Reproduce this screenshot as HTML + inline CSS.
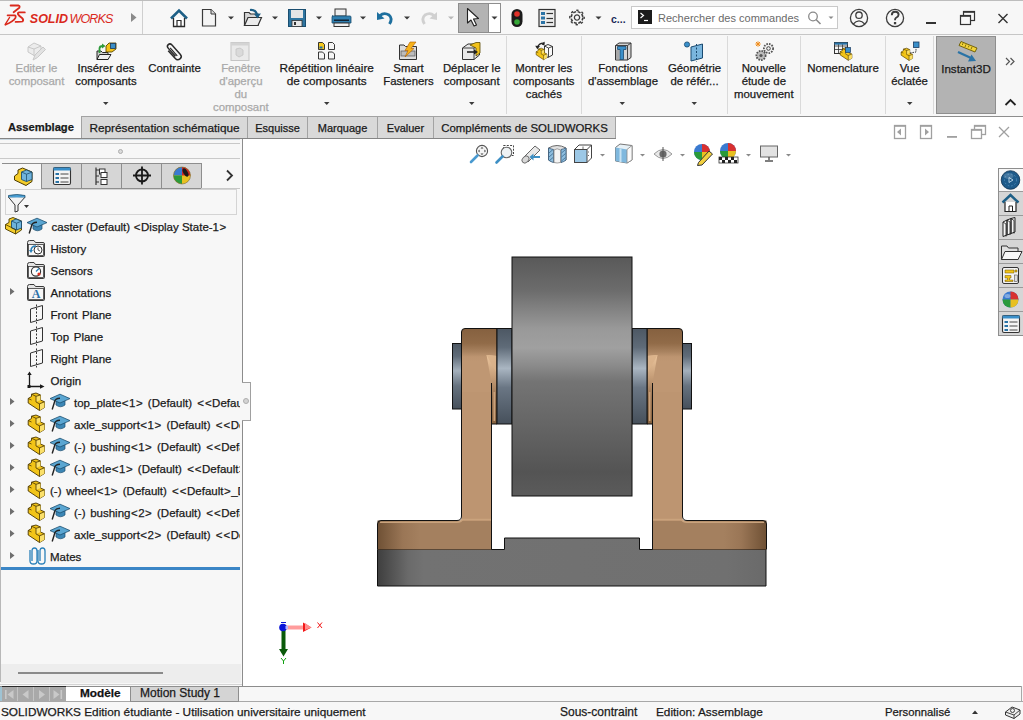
<!DOCTYPE html>
<html><head><meta charset="utf-8">
<style>
*{box-sizing:border-box;margin:0;padding:0}
html,body{width:1023px;height:720px;overflow:hidden;background:#fff;font-family:"Liberation Sans",sans-serif;font-size:12px;color:#1a1a1a;position:relative;-webkit-text-stroke:0.25px currentColor}
.a{position:absolute}
svg{position:absolute;overflow:visible}
.ln{position:absolute;background:#a0a0a0}
.rb{position:absolute;top:62px;text-align:center;font-size:11.4px;line-height:13px;color:#1a1a1a;white-space:nowrap;width:120px}
.rb.g{color:#a9a9a9}
.dd{position:absolute;width:0;height:0;border-left:3px solid transparent;border-right:3px solid transparent;border-top:3px solid #3c3c3c}
.dd.l{border-top-color:#b4b4b4}
.sep{position:absolute;top:36px;width:1px;height:78px;background:#dadada}
.tab{position:absolute;top:116px;height:23px;background:#d9d9d9;border:1px solid #a3a3a3;border-bottom:none;font-size:11.8px;line-height:22px;text-align:center;color:#1a1a1a;white-space:nowrap}
.tr{position:absolute;height:22px;line-height:22px;white-space:nowrap;font-size:11.5px;color:#1a1a1a}
.ab{padding:0 0.5px}
.ptab{position:absolute;top:163px;width:41px;height:26px;background:#d6d6d6;border:1px solid #8e8e8e;border-bottom:none}
.tp{position:absolute;top:168px;width:25px;height:24px;border-top:1px solid #8e8e8e;background:#d6d6d6}
.st{position:absolute;top:703px;height:18px;line-height:18px;font-size:12px;white-space:nowrap;color:#1a1a1a}
</style></head><body>
<!-- ============ TITLE BAR ============ -->
<div class="a" style="left:0;top:0;width:1023px;height:35px;background:#f7f7f7"></div>
<div class="ln" style="left:0;top:0;width:1023px;height:1px;background:#bdbdbd"></div>
<div class="ln" style="left:0;top:34px;width:1023px;height:1px;background:#c6c6c6"></div>
<div class="ln" style="left:142px;top:1px;width:1px;height:33px;background:#cfcfcf"></div>
<svg style="left:0;top:0" width="1023" height="35" viewBox="0 0 1023 35">
<!-- logo -->
<g fill="none" stroke="#da291c" stroke-linecap="round" stroke-linejoin="round">
<path d="M10.6 5.5 H18.6 Q20.2 6 19.3 7.8 L13.6 12.3" stroke-width="1.8"/>
<path d="M7.6 15.3 H14.8 Q16.2 15.8 15.4 17.8 Q13.5 21.5 5.4 24.7" stroke-width="1.8"/>
<path d="M9.6 17.4 L5.4 24.2" stroke-width="1.3"/>
<path d="M24.8 12.4 H19 Q17.6 12.8 18 14.3 Q19 16 22 18 Q24 19.8 22.6 21.5 Q21.5 22 15.6 21.9" stroke-width="1.8"/>
</g>
<text x="29.8" y="23" font-family="Liberation Sans" font-size="12.5" font-weight="bold" font-style="italic" fill="#da291c" style="-webkit-text-stroke:0.3px #da291c">SOLID</text>
<text x="69.5" y="23" font-family="Liberation Sans" font-size="12.5" font-style="italic" fill="#da291c" letter-spacing="-0.85" style="-webkit-text-stroke:0">WORKS</text>
<path d="M131 13 L136.5 17.5 L131 22 Z" fill="#8a8a8a"/>
<!-- home -->
<path d="M171 18.5 L179 10.5 L187 18.5" fill="none" stroke="#1d5f86" stroke-width="2.6" stroke-linejoin="miter"/>
<path d="M173.5 18 L173.5 26.5 L184.5 26.5 L184.5 18" fill="#fff" stroke="#2b2b2b" stroke-width="1.3"/>
<path d="M177 26.5 V20.5 H181 V26.5" fill="none" stroke="#2b2b2b" stroke-width="1.2"/>
<!-- page -->
<path d="M202.5 9.5 H211 L215.5 14 V26 H202.5 Z" fill="#f4f4f4" stroke="#3a3a3a" stroke-width="1.2"/>
<path d="M211 9.5 V14 H215.5" fill="#d8d8d8" stroke="#3a3a3a" stroke-width="1"/>
<!-- open -->
<path d="M244.5 12.5 H249 L250.5 14 H258 V25.5 H244.5 Z" fill="#d6d6d6" stroke="#333" stroke-width="1.2"/>
<path d="M244.5 25.5 L248 17.5 H261.5 L258 25.5 Z" fill="#ececec" stroke="#333" stroke-width="1.2"/>
<path d="M250 10 Q256 9.5 257 15" fill="none" stroke="#1d5f86" stroke-width="2.2"/>
<path d="M254 14 L257.5 18.5 L261 13.5 Z" fill="#1d5f86"/>
<!-- save -->
<rect x="288.5" y="9.5" width="17" height="17" fill="#2f75a0" stroke="#1a4e70" stroke-width="1"/>
<rect x="291" y="10" width="12" height="8" fill="#e6e6e6"/>
<rect x="292" y="20.5" width="10" height="6" fill="#e8e8e8" stroke="#333" stroke-width="0.8"/>
<rect x="294" y="22" width="2" height="3" fill="#333"/>
<!-- print -->
<rect x="335" y="9" width="11" height="7" fill="#eee" stroke="#333" stroke-width="1"/>
<path d="M332 16 H350 Q351 16 351 17 V23 H332 V17 Q332 16 333 16Z" fill="#2f7fb0" stroke="#1a4e70" stroke-width="0.8"/>
<rect x="334" y="23" width="15" height="3.5" fill="#f0f0f0" stroke="#333" stroke-width="1"/>
<rect x="334" y="19.5" width="15" height="1.5" fill="#123"/>
<!-- undo -->
<path d="M380 15.5 Q384 12 389 15 Q393 18.5 389.5 24" fill="none" stroke="#1d6f9e" stroke-width="2.8"/>
<path d="M377 12 L377 20 L384.5 18.5 Z" fill="#1d6f9e"/>
<!-- redo -->
<path d="M434 15.5 Q430 12 425 15 Q421 18.5 424.5 24" fill="none" stroke="#d0d0d0" stroke-width="2.8"/>
<path d="M437 12 L437 20 L429.5 18.5 Z" fill="#d0d0d0"/>
<!-- dropdowns -->
<g fill="#3a3a3a">
<path d="M228 16.5 H234 L231 19.5Z"/><path d="M272 16.5 H278 L275 19.5Z"/><path d="M316 16.5 H322 L319 19.5Z"/>
<path d="M360 16.5 H366 L363 19.5Z"/><path d="M404 16.5 H410 L407 19.5Z"/>
<path d="M491.5 16.5 H497.5 L494.5 19.5Z"/><path d="M595.5 16.5 H601.5 L598.5 19.5Z"/>
</g>
<path d="M448 16.5 H454 L451 19.5Z" fill="#b8b8b8"/>
<!-- select box -->
<rect x="458.5" y="3.5" width="42" height="29" fill="#fff" stroke="#8e8e8e" stroke-width="1"/>
<rect x="458.5" y="3.5" width="30" height="29" fill="#b3b3b3" stroke="#8e8e8e" stroke-width="1"/>
<path d="M491.5 16.5 H497.5 L494.5 19.5Z" fill="#3a3a3a"/>
<path d="M467.5 8.5 V23 L471 20 L474 26 L476.5 25 L473.5 19 L478.5 18.5 Z" fill="#fff" stroke="#222" stroke-width="1.1" stroke-linejoin="round"/>
<!-- traffic light -->
<rect x="511.5" y="9" width="11" height="18" rx="5.5" fill="#1c1c1c"/>
<circle cx="517" cy="14" r="2.8" fill="#e0322a"/>
<circle cx="517" cy="22" r="2.8" fill="#36a838"/>
<!-- list -->
<rect x="539" y="9.5" width="16" height="17" fill="#ececec" stroke="#333" stroke-width="1.2"/>
<g fill="#2a73a6"><rect x="541" y="12" width="4" height="3"/><rect x="541" y="16.5" width="4" height="3"/><rect x="541" y="21" width="4" height="3"/></g>
<g stroke="#333" stroke-width="1.2"><path d="M546.5 13.5 H553"/><path d="M546.5 18.5 H553"/><path d="M546.5 22.5 H553"/></g>
<!-- gear -->
<g transform="translate(577,17.5)">
<path d="M-1.5 -8 H1.5 L2 -5.6 L4.2 -4.7 L6.2 -6.2 L8.2 -4.2 L6.7 -2.2 L7.6 0 L8 1.5 V-1.5" fill="none"/>
<circle r="5.8" fill="none" stroke="#3d3d3d" stroke-width="1.6" stroke-dasharray="3.0 1.55"/>
<circle r="7.2" fill="none" stroke="#3d3d3d" stroke-width="1.4" stroke-dasharray="2.4 3.25" stroke-dashoffset="1"/>
<circle r="2.6" fill="none" stroke="#3d3d3d" stroke-width="1.3"/>
</g>
<text x="611" y="22.5" font-family="Liberation Sans" font-size="10.5" font-weight="bold" fill="#1a2a5a">c...</text>
<!-- search -->
<rect x="631.5" y="6.5" width="206" height="22" fill="#fff" stroke="#c9c9c9" stroke-width="1"/>
<rect x="638" y="10" width="14" height="14" fill="#1c1c1c"/>
<path d="M640.5 13 L643.5 15.5 L640.5 18" fill="none" stroke="#fff" stroke-width="1.2"/>
<path d="M644 20.5 H648" stroke="#fff" stroke-width="1.2"/>
<text x="658" y="22" font-family="Liberation Sans" font-size="11" fill="#6a6a6a" letter-spacing="0.02">Rechercher des commandes</text>
<circle cx="813" cy="16.5" r="4.3" fill="none" stroke="#8a8a8a" stroke-width="1.3"/>
<path d="M816 19.5 L820.5 24" stroke="#8a8a8a" stroke-width="1.6"/>
<path d="M828.5 16.5 H833.5 L831 19Z" fill="#8a8a8a"/>
<!-- user -->
<circle cx="859" cy="18" r="8.6" fill="none" stroke="#3d3d3d" stroke-width="1.3"/>
<circle cx="859" cy="15.2" r="3.2" fill="none" stroke="#3d3d3d" stroke-width="1.3"/>
<path d="M853 24.2 Q859 17.5 865 24.2" fill="none" stroke="#3d3d3d" stroke-width="1.3"/>
<!-- help -->
<circle cx="895" cy="18" r="8.6" fill="none" stroke="#3d3d3d" stroke-width="1.3"/>
<path d="M891.8 15.2 Q891.8 11.8 895.2 11.8 Q898.6 11.8 898.6 14.8 Q898.6 16.6 895.8 18 Q895 18.5 895 20.2" fill="none" stroke="#3d3d3d" stroke-width="1.9"/><rect x="893.9" y="22" width="2.3" height="2.3" fill="#3d3d3d"/>
<!-- window -->
<rect x="926" y="22" width="10" height="2" fill="#333"/>
<rect x="963.5" y="11.5" width="11" height="9" fill="none" stroke="#333" stroke-width="1.2"/>
<rect x="960.5" y="15.5" width="10" height="9" fill="#f7f7f7" stroke="#333" stroke-width="1.2"/>
<rect x="963" y="11" width="12" height="1.8" fill="#333"/>
<rect x="960" y="15" width="11" height="1.8" fill="#333"/>
<path d="M998.5 14 L1007.5 23 M1007.5 14 L998.5 23" stroke="#333" stroke-width="1.4"/>
</svg>

<!-- ============ RIBBON ============ -->
<div class="a" style="left:0;top:35px;width:1023px;height:82px;background:#f7f7f7"></div>
<div class="sep" style="left:506px"></div>
<div class="sep" style="left:581px"></div>
<div class="sep" style="left:727px"></div>
<div class="sep" style="left:800px"></div>
<div class="sep" style="left:885px"></div>
<div class="sep" style="left:933px"></div>
<div class="a" style="left:936px;top:36px;width:60px;height:78px;background:#b3b3b3;border:1px solid #8e8e8e"></div>
<div class="rb g" style="left:-23.5px">Editer le<br>composant</div>
<div class="rb" style="left:46px">Insérer des<br>composants</div>
<div class="rb" style="left:114.6px">Contrainte</div>
<div class="rb g" style="left:180.8px">Fenêtre<br>d'aperçu<br>du<br>composant</div>
<div class="rb" style="left:266.7px;font-size:11.8px">Répétition linéaire<br>de composants</div>
<div class="rb" style="left:348.5px">Smart<br>Fasteners</div>
<div class="rb" style="left:411.7px">Déplacer le<br>composant</div>
<div class="rb" style="left:483.8px">Montrer les<br>composants<br>cachés</div>
<div class="rb" style="left:563px">Fonctions<br>d'assemblage</div>
<div class="rb" style="left:634.5px">Géométrie<br>de référ...</div>
<div class="rb" style="left:703.8px">Nouvelle<br>étude de<br>mouvement</div>
<div class="rb" style="left:783px;font-size:11.5px">Nomenclature</div>
<div class="rb" style="left:849.6px">Vue<br>éclatée</div>
<div class="rb" style="left:906px;font-size:11.6px">Instant3D</div>
<svg style="left:0;top:35px" width="1023" height="81" viewBox="0 35 1023 81">
<g fill="#3c3c3c">
<path d="M103 102 H108.5 L105.75 105Z"/><path d="M324 102 H329.5 L326.75 105Z"/><path d="M469 102 H474.5 L471.75 105Z"/>
<path d="M619.5 102 H625 L622.25 105Z"/><path d="M691.5 102 H697 L694.25 105Z"/><path d="M907 102 H912.5 L909.75 105Z"/>
</g>
<path d="M1006 58 L1009.5 61.5 L1006 65 M1010.5 58 L1014 61.5 L1010.5 65" fill="none" stroke="#555" stroke-width="1.2"/>
<path d="M1005.5 105 L1010.5 100 L1015.5 105" fill="none" stroke="#222" stroke-width="1.8"/>
<!-- editer (gray) -->
<g stroke="#c8c8c8" fill="#ececec" stroke-width="1">
<path d="M28 47 L34 43 L41 46 L41 52 L35 56 L28 52 Z"/>
<path d="M34 49 L41 46 M34 49 L34 56 M28 47 L34 49"/>
<path d="M33 60 L35 55 L43 47 L45.5 49.5 L37.5 57.5 Z" fill="#e2e2e2"/>
</g>
<!-- inserer -->
<path d="M97 51 H101 L102.5 52.5 H108 V59.5 H97 Z" fill="#cfcfcf" stroke="#222" stroke-width="1"/>
<path d="M97 59.5 L99.5 54.5 H111 L108 59.5 Z" fill="#eee" stroke="#222" stroke-width="1"/>
<path d="M99.5 53 V48.5 Q99.5 46 103 46" fill="none" stroke="#2e9a3a" stroke-width="1.8"/>
<path d="M102 43.5 L105.5 46 L102 48.5Z" fill="#2e9a3a"/>
<path d="M106 46 L109 43 L116 43 L116 49 L112 52 L106 52 Z" fill="#f2c21b" stroke="#5a4a00" stroke-width="0.9"/>
<rect x="110.5" y="43.5" width="5" height="5" fill="#3a8fc9" stroke="#1a3a60" stroke-width="0.8"/>
<!-- contrainte paperclip -->
<g transform="translate(174,51) rotate(-42) scale(0.82)">
<path d="M-3 6 V-7 Q-3 -10.5 0 -10.5 Q3 -10.5 3 -7 V8 Q3 12 -0.5 12 Q-5 12 -5 8 V-5" fill="none" stroke="#2a2a2a" stroke-width="1.8"/>
<path d="M-1 7 V-6" fill="none" stroke="#2a2a2a" stroke-width="1.5"/>
</g>
<!-- fenetre gray -->
<rect x="231" y="42.5" width="18" height="18" fill="#eaeaea" stroke="#c4c4c4" stroke-width="1"/>
<rect x="231" y="42.5" width="18" height="3" fill="#d4d4d4"/>
<path d="M236 49 L240 48 L243 50 V55 L239 57 L236 55Z" fill="#dadada" stroke="#c4c4c4" stroke-width="0.8"/>
<!-- repetition -->
<g stroke="#222" stroke-width="0.9">
<path d="M318.5 42.5 H322.5 L324.5 44.5 V49.5 H318.5 Z" fill="#f4c81e"/>
<path d="M328.5 42.5 H332.5 L334.5 44.5 V49.5 H328.5 Z" fill="#f5f5f5"/>
<path d="M318.5 52 H322.5 L324.5 54 V59 H318.5 Z" fill="#f5f5f5"/>
<path d="M328.5 52 H332.5 L334.5 54 V59 H328.5 Z" fill="#f5f5f5"/>
</g>
<rect x="319.5" y="46.5" width="3" height="2" fill="#2a73a6"/>
<!-- smart fasteners -->
<path d="M399.5 45 H404 L405.5 46.5 H416.5 V59.5 H399.5 Z" fill="#dcdcdc" stroke="#333" stroke-width="1"/>
<rect x="401" y="51" width="14" height="5" fill="#bcbcbc" stroke="#555" stroke-width="0.7"/>
<path d="M410 42 L416 42 L411 48.5 L414 48.5 L405 57 L408 50.5 L405 50.5 Z" fill="#f6b21b" stroke="#b05a00" stroke-width="0.6"/>
<!-- deplacer -->
<path d="M462.5 48 L468 44 H479.5 V55 L474 59.5 H462.5 Z" fill="#e8e8e8" stroke="#333" stroke-width="1"/>
<path d="M462.5 48 H474 V59.5 M474 48 L479.5 44" fill="none" stroke="#333" stroke-width="0.9"/>
<path d="M470 45 L476 42.5 H480 V53 L476 56 V48 Z" fill="#f2c21b" stroke="#5a4a00" stroke-width="0.8"/>
<path d="M467 52 H476" stroke="#222" stroke-width="1.6"/><path d="M474 49.5 L478 52 L474 54.5Z" fill="#222"/>
<!-- montrer -->
<path d="M544.5 46 L548 44.5 L552.5 46.5 V55 L548 57.5 L544.5 55.5 Z" fill="#fafafa" stroke="#222" stroke-width="0.9"/>
<path d="M544.5 46 L548.5 48 V57 M548.5 48 L552.5 46.5" fill="none" stroke="#222" stroke-width="0.8"/>
<g transform="translate(536,47.5) scale(0.66)"><use href="#part"/></g>
<path d="M537.5 47 Q539.5 42.5 544.5 43.2" fill="none" stroke="#222" stroke-width="1.3"/>
<path d="M535.2 45.8 L540 46 L537.3 49.2 Z M544.5 41.5 V45.5 L541.5 44.5 Z" fill="#222"/>
<!-- fonctions assemblage -->
<path d="M615.5 45.5 L619 43 H631 V57.5 L627.5 60 H615.5 Z" fill="#d4d4d4" stroke="#333" stroke-width="1"/>
<path d="M615.5 45.5 H627.5 V60 M627.5 45.5 L631 43" fill="none" stroke="#333" stroke-width="0.9"/>
<path d="M617.5 46.5 H626 V49.5 H623.5 V59.5 H620 V49.5 H617.5 Z" fill="#3a8fc9" stroke="#1a4a70" stroke-width="0.8"/>
<rect x="616" y="50" width="3" height="9.5" fill="#a8a8a8"/>
<!-- geometrie -->
<circle cx="687" cy="44.5" r="2.6" fill="#3a8fc9" stroke="#1a4a70" stroke-width="0.8"/>
<path d="M691 47 L702.5 44 V58 L691 61 Z" fill="#7ab6de" stroke="#1a4a70" stroke-width="1"/>
<path d="M696.5 44 V62" stroke="#1a4a70" stroke-width="1" stroke-dasharray="2 1.5"/>
<!-- nouvelle etude -->
<circle cx="768.5" cy="48.5" r="4.6" fill="#f2f2f2" stroke="#555" stroke-width="1.8" stroke-dasharray="1.6 1.1"/>
<circle cx="768.5" cy="48.5" r="1.8" fill="none" stroke="#444" stroke-width="1"/>
<circle cx="761" cy="55.5" r="4.6" fill="#bdbdbd" stroke="#555" stroke-width="1.8" stroke-dasharray="1.6 1.1"/>
<circle cx="761" cy="55.5" r="1.6" fill="#555"/>
<path d="M756 42 L760 46 M760 42 L756 46 M758 41.3 V46.7 M755.3 44 H760.7" stroke="#f08c1a" stroke-width="1"/>
<!-- nomenclature -->
<rect x="834.5" y="42.5" width="13" height="11" fill="#f5f5f5" stroke="#333" stroke-width="1"/>
<path d="M834.5 46 H847.5 M834.5 49.5 H847.5 M838.5 42.5 V53.5 M842.5 42.5 V53.5" stroke="#333" stroke-width="0.8"/>
<rect x="834.5" y="42.5" width="13" height="2.2" fill="#2a73a6"/>
<g transform="translate(840,47) scale(0.72)"><use href="#part"/></g>
<rect x="845.5" y="47.5" width="5" height="5" fill="#3a8fc9" stroke="#1a3a60" stroke-width="0.7"/>
<!-- vue eclatee -->
<g transform="translate(901,47.5) scale(0.7)"><use href="#part"/></g>
<rect x="913.5" y="42" width="5.5" height="5.5" fill="#3a8fc9" stroke="#1a3a60" stroke-width="0.8"/>
<path d="M910 53 L916 52 V48" fill="none" stroke="#222" stroke-width="0.9" stroke-dasharray="1.5 1"/>
<!-- instant3d -->
<path d="M959 45.5 L961 41.5 L977 48 L975 52 Z" fill="#f2d23a" stroke="#6a5a00" stroke-width="0.9"/>
<path d="M963 43.2 L962.3 45 M966 44.4 L965 47 M969 45.6 L968.3 47.4 M972 46.8 L971 49.4" stroke="#6a5a00" stroke-width="0.8"/>
<path d="M958 52 L971 58" stroke="#2a73a6" stroke-width="2.4"/>
<path d="M976 61 L968 61.5 L971.5 54.5 Z" fill="#2a73a6"/>
</svg>

<div class="ln" style="left:81px;top:116px;width:942px;height:1px;background:#8e8e8e"></div>
<!-- ============ TABS ============ -->
<div class="a" style="left:0;top:117px;width:615px;height:22px;background:#f7f7f7"></div>
<div class="a" style="left:8px;top:117px;height:21px;line-height:21px;font-weight:bold;font-size:11.2px;color:#1a1a1a">Assemblage</div>
<div class="tab" style="left:81px;width:167px">Représentation schématique</div>
<div class="tab" style="left:247px;width:61px;font-size:11px">Esquisse</div>
<div class="tab" style="left:307px;width:71px;font-size:11px">Marquage</div>
<div class="tab" style="left:377px;width:57px;font-size:11px">Evaluer</div>
<div class="tab" style="left:433px;width:183px;font-size:11.4px">Compléments de SOLIDWORKS</div>
<div class="ln" style="left:0;top:138px;width:616px;height:1px;background:#858585"></div>
<!-- ============ LEFT PANEL ============ -->
<div class="a" style="left:0;top:139px;width:242px;height:547px;background:#f7f7f7"></div>
<div class="ln" style="left:0;top:139px;width:240px;height:1px;background:#c9d6de"></div>
<div class="ln" style="left:0;top:143px;width:240px;height:1px;background:#c8c8c8"></div>
<div class="a" style="left:117.5px;top:148.5px;width:5px;height:5px;border-radius:50%;background:#dcdcdc;border:1px solid #adadad"></div>
<div class="ln" style="left:0;top:158px;width:240px;height:1px;background:#cacaca"></div>
<div class="ln" style="left:2px;top:163px;width:40px;height:1px;background:#8e8e8e"></div>
<div class="a" style="left:41px;top:163px;width:41px;height:26px;background:#d6d6d6;border:1px solid #8e8e8e"></div>
<div class="a" style="left:81px;top:163px;width:41px;height:26px;background:#d6d6d6;border:1px solid #8e8e8e"></div>
<div class="a" style="left:121px;top:163px;width:41px;height:26px;background:#d6d6d6;border:1px solid #8e8e8e"></div>
<div class="a" style="left:161px;top:163px;width:41px;height:26px;background:#d6d6d6;border:1px solid #8e8e8e"></div>
<div class="ln" style="left:201px;top:188px;width:39px;height:1px;background:#c8c8c8"></div>
<div class="ln" style="left:0;top:189px;width:1px;height:493px;background:#b8b8b8"></div>
<div class="a" style="left:5px;top:189px;width:232px;height:26px;background:#f7f7f7;border:1px solid #d4d4d4"></div>
<div class="ln" style="left:1px;top:567px;width:239px;height:3px;background:#3b86c6"></div>
<div class="a" style="left:1px;top:664px;width:240px;height:19px;background:#ededed"></div>
<div class="ln" style="left:18px;top:672px;width:145px;height:2px;background:#8a8a8a"></div>
<div class="ln" style="left:0;top:684px;width:242px;height:1px;background:#d4d4d4"></div>
<div class="a" style="left:0;top:215px;width:240px;height:352px;overflow:hidden;word-spacing:1.5px"><div class="tr" style="left:51.5px;top:1px;word-spacing:0">caster (Default) <span class="ab">&lt;</span>Display State-1<span class="ab">&gt;</span></div><div class="tr" style="left:50.5px;top:23px">History</div><div class="tr" style="left:50.5px;top:45px">Sensors</div><div class="tr" style="left:50.5px;top:67px">Annotations</div><div class="tr" style="left:50.5px;top:89px">Front Plane</div><div class="tr" style="left:50.5px;top:111px">Top Plane</div><div class="tr" style="left:50.5px;top:133px">Right Plane</div><div class="tr" style="left:50.5px;top:155px">Origin</div><div class="tr" style="left:74px;top:177px">top_plate<span class="ab">&lt;</span>1<span class="ab">&gt;</span> (Default) <span class="ab">&lt;</span><span class="ab">&lt;</span>Default<span class="ab">&gt;</span>_Display State 1<span class="ab">&gt;</span></div><div class="tr" style="left:74px;top:199px">axle_support<span class="ab">&lt;</span>1<span class="ab">&gt;</span> (Default) <span class="ab">&lt;</span><span class="ab">&lt;</span>Default<span class="ab">&gt;</span>_Display State 1<span class="ab">&gt;</span></div><div class="tr" style="left:74px;top:221px">(-) bushing<span class="ab">&lt;</span>1<span class="ab">&gt;</span> (Default) <span class="ab">&lt;</span><span class="ab">&lt;</span>Default<span class="ab">&gt;</span>_Display State 1<span class="ab">&gt;</span></div><div class="tr" style="left:74px;top:243px">(-) axle<span class="ab">&lt;</span>1<span class="ab">&gt;</span> (Default) <span class="ab">&lt;</span><span class="ab">&lt;</span>Default<span class="ab">&gt;</span>_Display State 1<span class="ab">&gt;</span></div><div class="tr" style="left:50px;top:265px">(-) wheel<span class="ab">&lt;</span>1<span class="ab">&gt;</span> (Default) <span class="ab">&lt;</span><span class="ab">&lt;</span>Default<span class="ab">&gt;</span>_Display State 1<span class="ab">&gt;</span></div><div class="tr" style="left:74px;top:287px">(-) bushing<span class="ab">&lt;</span>2<span class="ab">&gt;</span> (Default) <span class="ab">&lt;</span><span class="ab">&lt;</span>Default<span class="ab">&gt;</span>_Display State 1<span class="ab">&gt;</span></div><div class="tr" style="left:74px;top:309px">axle_support<span class="ab">&lt;</span>2<span class="ab">&gt;</span> (Default) <span class="ab">&lt;</span><span class="ab">&lt;</span>Default<span class="ab">&gt;</span>_Display State 1<span class="ab">&gt;</span></div><div class="tr" style="left:50px;top:331px">Mates</div></div>
<svg style="left:0;top:0" width="243" height="686" viewBox="0 0 243 686">
<g transform="translate(14,167)"><path d="M0.5 9 L4 6.5 V3 L8.5 1 L18 5 V14.5 L12 18.5 L0.5 13 Z" fill="#f4cc2a" stroke="#4a3a00" stroke-width="1" stroke-linejoin="round"/><path d="M7.5 5 L12.5 3 L18 5.2 V12.5 L12.5 14.5 L7.5 12.5 Z" fill="#6fb3dc" stroke="#1d4f70" stroke-width="0.9"/><path d="M7.5 5 L12.5 7.2 V14.5 M12.5 7.2 L18 5.2" fill="none" stroke="#1d4f70" stroke-width="0.8"/></g>
<g transform="translate(53,167)"><rect x="0.5" y="0.5" width="17" height="17" rx="1.5" fill="#f4f4f4" stroke="#333" stroke-width="1.1"/><rect x="0.5" y="0.5" width="17" height="3" fill="#3a8fc9"/><rect x="2.5" y="6" width="3.5" height="2" fill="#2a73a6"/><rect x="2.5" y="10" width="3.5" height="2" fill="#2a73a6"/><rect x="2.5" y="14" width="3.5" height="2" fill="#2a73a6"/><path d="M7.5 7 H15.5 M7.5 11 H15.5 M7.5 15 H15.5" stroke="#333" stroke-width="0.9"/></g>
<g transform="translate(95,167)"><path d="M1 0.5 V18 M1 3 H4 M1 15 H4 M1 9 H4" stroke="#333" stroke-width="1.2" fill="none"/><rect x="4.5" y="2" width="5.5" height="5" fill="#fff" stroke="#333" stroke-width="1"/><rect x="6" y="5.5" width="6" height="5" fill="#fff" stroke="#333" stroke-width="1"/><rect x="6" y="12.5" width="6" height="5" fill="#fff" stroke="#333" stroke-width="1"/></g>
<g transform="translate(142,175.5)"><circle r="6" fill="none" stroke="#1a1a1a" stroke-width="1.8"/><path d="M0 -9 V9 M-9 0 H9" stroke="#1a1a1a" stroke-width="1.8"/></g>
<g transform="translate(182,175.5)"><circle r="8.5" fill="#e8c020"/><path d="M0 0 L-8.5 0 A8.5 8.5 0 0 1 0 -8.5 Z" fill="#3a7ad0"/><path d="M0 0 L0 -8.5 A8.5 8.5 0 0 1 8.5 0 Z" fill="#d02828"/><path d="M0 0 L-8.5 0 A8.5 8.5 0 0 0 0 8.5 Z" fill="#2a9a3a"/><ellipse cx="3.5" cy="-3" rx="2.2" ry="4.5" transform="rotate(-30 3.5 -3)" fill="#1a1a1a"/><circle r="8.5" fill="none" stroke="#7a6a30" stroke-width="0.6"/></g>
<path d="M227 170.5 L232 175.5 L227 180.5" fill="none" stroke="#333" stroke-width="1.8"/>
<g transform="translate(8,194)"><path d="M0.5 1.5 Q9 -0.5 17 1.5 V3.5 Q9 5.5 0.5 3.5 Z" fill="#4a9fd4" stroke="#1d4f70" stroke-width="0.8"/><path d="M0.8 3.5 L7 11 V18 L10 17 V11 L16.7 3.5" fill="#f4f4f4" stroke="#333" stroke-width="1"/></g>
<path d="M24 205 H29 L26.5 208 Z" fill="#333"/>
<defs>
<g id="hat"><path d="M6 9 V13 Q10.5 16.5 15 13 V8.5 Z" fill="#3b86b5" stroke="#1d4f70" stroke-width="0.7"/>
<path d="M0 6.6 L10 2.2 L20 6.6 L10 11 Z" fill="#5aa6d2" stroke="#1d4f70" stroke-width="0.8" stroke-linejoin="round"/>
<path d="M10 6.3 Q5 6.5 4.5 10 L2.2 17.5" fill="none" stroke="#222" stroke-width="1.4"/></g>
<g id="part"><path d="M0.2 6.5 L3.5 4.5 V2.2 L8 1 L12.5 3 V8 L16.5 9.8 V15.5 L11.5 18.5 L0.2 11 Z" fill="#f2c418" stroke="#4a3600" stroke-width="0.9" stroke-linejoin="round"/>
<path d="M8 4.3 L12.5 3 V8 L8 10 Z" fill="#fbe06a"/><path d="M11.5 11.8 L16.5 9.8 V15.5 L11.5 18.5 Z" fill="#fbe06a"/>
<path d="M3.5 2.2 L8 4.3 L12.5 3 M8 4.3 V10 L11.5 11.8 L16.5 9.8 M11.5 11.8 V18.5 M0.2 6.5 L3.5 8" fill="none" stroke="#4a3600" stroke-width="0.8"/></g>
<g id="folder"><path d="M0.5 2.5 Q0.5 0.5 2.5 0.5 H7 L8.5 2.5 H16 Q17.5 2.5 17.5 4 V15.5 Q17.5 16.5 16.5 16.5 H1.5 Q0.5 16.5 0.5 15.5 Z" fill="#e4e4e4" stroke="#3a3a3a" stroke-width="1"/>
<rect x="1.5" y="4.5" width="15" height="11" fill="#f6f6f6" stroke="#3a3a3a" stroke-width="0.8"/></g>
<g id="plane"><path d="M0.5 4 L12.5 0.5 V14 L0.5 17.5 Z" fill="none" stroke="#333" stroke-width="1"/>
<path d="M6.5 -0.5 V18.5" stroke="#333" stroke-width="1" stroke-dasharray="2 1.5"/></g>
<g id="tri"><path d="M0 0 L4.5 3.5 L0 7 Z" fill="#6e6e6e"/></g>
</defs><g transform="translate(5,217)"><path d="M0.5 7.5 L4 5.5 V2 L8 0.5 L16.5 4 V13 L10.5 17 L0.5 12 Z" fill="#f4cc2a" stroke="#4a3a00" stroke-width="0.9" stroke-linejoin="round"/><path d="M6.5 4 L11 2 L16.5 4.2 V11 L11.5 13 L6.5 11 Z" fill="#6fb3dc" stroke="#1d4f70" stroke-width="0.9"/><path d="M6.5 4 L11.5 6.2 V13 M11.5 6.2 L16.5 4.2" fill="none" stroke="#1d4f70" stroke-width="0.8"/><path d="M0.5 7.5 L10.5 12.5 V17" fill="none" stroke="#4a3a00" stroke-width="0.8"/></g><use href="#hat" x="27" y="216"/><use href="#folder" x="27" y="240"/><circle cx="38" cy="250" r="4" fill="#fff" stroke="#333" stroke-width="1"/><path d="M38 247.5 V250 L40 251" fill="none" stroke="#333" stroke-width="0.8"/><path d="M31 251 Q31 246 36 246" fill="none" stroke="#2a80b9" stroke-width="1.6"/><path d="M29 250 L33 250 L31 253 Z" fill="#2a80b9"/><use href="#folder" x="27" y="262"/><circle cx="36" cy="271.5" r="4.6" fill="#fff" stroke="#333" stroke-width="1.1"/><path d="M36 271.5 L39 268.5" stroke="#2a80b9" stroke-width="1.2"/><circle cx="39" cy="274" r="1.6" fill="#e03020"/><use href="#tri" x="10" y="288"/><use href="#folder" x="27" y="284"/><text x="36" y="298" text-anchor="middle" font-family="Liberation Serif" font-weight="bold" font-size="12" fill="#2a6fa8">A</text><use href="#plane" x="30" y="305"/><use href="#plane" x="30" y="327"/><use href="#plane" x="30" y="349"/><g transform="translate(27,371)"><path d="M2.5 3 V15.5 H14" fill="none" stroke="#1a1a1a" stroke-width="1.3"/><path d="M0.3 4 L2.5 0.5 L4.7 4 Z M13 13.3 L17.5 15.5 L13 17.7 Z" fill="#1a1a1a"/><rect x="0.5" y="14" width="3" height="3" fill="#1a1a1a"/></g><use href="#tri" x="10" y="398"/><use href="#part" x="28" y="392"/><use href="#hat" x="50" y="392"/><use href="#tri" x="10" y="420"/><use href="#part" x="28" y="414"/><use href="#hat" x="50" y="414"/><use href="#tri" x="10" y="442"/><use href="#part" x="28" y="436"/><use href="#hat" x="50" y="436"/><use href="#tri" x="10" y="464"/><use href="#part" x="28" y="458"/><use href="#hat" x="50" y="458"/><use href="#tri" x="10" y="486"/><use href="#part" x="28" y="480"/><use href="#tri" x="10" y="508"/><use href="#part" x="28" y="502"/><use href="#hat" x="50" y="502"/><use href="#tri" x="10" y="530"/><use href="#part" x="28" y="524"/><use href="#hat" x="50" y="524"/><use href="#tri" x="10" y="552"/><g transform="translate(27,547)"><path d="M5 14 V4 Q5 1 7.5 1 Q10 1 10 4 V14 Q10 17 6.5 17 Q3 17 3 14 V3" fill="none" stroke="#2a80b9" stroke-width="1.3"/></g><g transform="translate(35,547)"><path d="M5 14 V4 Q5 1 7.5 1 Q10 1 10 4 V14 Q10 17 6.5 17 Q3 17 3 14 V3" fill="none" stroke="#2a80b9" stroke-width="1.3"/></g>
</svg>

<div class="ln" style="left:242px;top:139px;width:1px;height:547px;background:#8c8c8c"></div>
<!-- ============ VIEWPORT ============ -->
<div class="a" style="left:242px;top:382px;width:9px;height:39px;background:#f7f7f7;border:1px solid #a0a0a0;border-left:none"></div>
<div class="a" style="left:243px;top:398px;width:6px;height:6px;border-radius:50%;background:#d4d4d4;border:1px solid #aeaeae"></div>
<svg style="left:0;top:0" width="1023" height="720" viewBox="0 0 1023 720">
<defs>
<linearGradient id="gw" x1="0" y1="257" x2="0" y2="496" gradientUnits="userSpaceOnUse">
<stop offset="0" stop-color="#595959"/><stop offset="0.14" stop-color="#6c6c6c"/><stop offset="0.3" stop-color="#999999"/><stop offset="0.38" stop-color="#a0a0a0"/><stop offset="0.45" stop-color="#8c8c8c"/><stop offset="0.52" stop-color="#747474"/><stop offset="0.68" stop-color="#676767"/><stop offset="0.9" stop-color="#545454"/><stop offset="1" stop-color="#5b5b5b"/>
</linearGradient>
<linearGradient id="gb" x1="0" y1="328" x2="0" y2="424" gradientUnits="userSpaceOnUse">
<stop offset="0" stop-color="#4c5763"/><stop offset="0.2" stop-color="#5f6b78"/><stop offset="0.42" stop-color="#aab6c2"/><stop offset="0.62" stop-color="#6a7684"/><stop offset="1" stop-color="#46505b"/>
</linearGradient>
<linearGradient id="gc" x1="0" y1="343" x2="0" y2="409" gradientUnits="userSpaceOnUse">
<stop offset="0" stop-color="#4c5763"/><stop offset="0.2" stop-color="#5f6b78"/><stop offset="0.42" stop-color="#a4b0bc"/><stop offset="0.65" stop-color="#66727f"/><stop offset="1" stop-color="#46505b"/>
</linearGradient>
<linearGradient id="gs" x1="0" y1="328" x2="0" y2="362" gradientUnits="userSpaceOnUse">
<stop offset="0" stop-color="#85603f"/><stop offset="0.45" stop-color="#916b48"/><stop offset="0.7" stop-color="#a98360"/><stop offset="0.85" stop-color="#bd9571"/><stop offset="1" stop-color="#bf9773"/>
</linearGradient>
<linearGradient id="gfl" x1="377" y1="0" x2="420" y2="0" gradientUnits="userSpaceOnUse">
<stop offset="0" stop-color="#6e5034"/><stop offset="0.6" stop-color="#9a7656"/><stop offset="1" stop-color="#a4805f"/>
</linearGradient>
<linearGradient id="gfr" x1="766" y1="0" x2="720" y2="0" gradientUnits="userSpaceOnUse">
<stop offset="0" stop-color="#7e5a3c"/><stop offset="0.6" stop-color="#987454"/><stop offset="1" stop-color="#a4805f"/>
</linearGradient>
<linearGradient id="gbase" x1="377" y1="0" x2="766" y2="0" gradientUnits="userSpaceOnUse">
<stop offset="0" stop-color="#3e3e3e"/><stop offset="0.08" stop-color="#6a6a6a"/><stop offset="0.12" stop-color="#727272"/><stop offset="0.9" stop-color="#707070"/><stop offset="1" stop-color="#6a6a6a"/>
</linearGradient>
<linearGradient id="gch" x1="0" y1="356" x2="0" y2="424" gradientUnits="userSpaceOnUse">
<stop offset="0" stop-color="#eac49c"/><stop offset="0.3" stop-color="#c79f79"/><stop offset="0.6" stop-color="#9c7654"/><stop offset="1" stop-color="#86623f"/>
</linearGradient>
</defs>
<!-- base plate -->
<path d="M377.5 549.5 H504.5 V538 H639.5 V549.5 H766 V586 H377.5 Z" fill="url(#gbase)" stroke="#111" stroke-width="1"/>
<!-- flanges -->
<g id="supL">
<rect x="377.5" y="520.5" width="114" height="29" fill="url(#gfl)"/>
<rect x="461.5" y="383" width="30" height="138" fill="#bd9571"/>
<path d="M461.5 392 V332 Q461.5 328.5 465 328.5 H497 V424 H491.5 V392 Z" fill="url(#gs)"/>
<path d="M486.5 355 L497 356 V424 H491.5 V383 Z" fill="url(#gch)"/><path d="M486.5 355 L497 374 V356 Z" fill="#d9b189" opacity="0.9"/><path d="M494.3 392 V421" stroke="#c9a17b" stroke-width="1.6"/><path d="M491.5 383 V424" stroke="#111" stroke-width="1"/>
<path d="M380 522.3 H457 Q461 522 462.5 519.5 H491" fill="none" stroke="#caa37d" stroke-width="1.5"/>
<path d="M377.5 549.5 V524 Q377.5 520.5 381 520.5 H457 Q461.5 520.5 461.5 516 V332 Q461.5 328.5 465 328.5 H497 V424 H491.5 V549.5" fill="none" stroke="#111" stroke-width="1"/>
</g>
<use href="#supL" transform="translate(1144,0) scale(-1,1)"/>
<!-- caps -->
<rect x="452.5" y="343.5" width="9" height="65.5" fill="url(#gc)" stroke="#111" stroke-width="1"/>
<rect x="682.5" y="343.5" width="9" height="65.5" fill="url(#gc)" stroke="#111" stroke-width="1"/>
<!-- bushings -->
<rect x="497" y="328.5" width="15" height="95.5" fill="url(#gb)" stroke="#111" stroke-width="1"/>
<rect x="632" y="328.5" width="15" height="95.5" fill="url(#gb)" stroke="#111" stroke-width="1"/>
<!-- wheel -->
<rect x="512" y="257" width="120" height="239" fill="url(#gw)" stroke="#111" stroke-width="1"/>
<!-- triad -->
<path d="M286 625.5 H304 V629.5 H286 Z" fill="#ff9c9c"/>
<path d="M303 622.5 L311.5 627.5 L303 632 Z" fill="#f21818"/>
<path d="M305 623 L311.5 627.5 L305 630 Z" fill="#ff8c8c"/>
<path d="M317.5 622.5 L322 628 M322 622.5 L317.5 628" stroke="#f21818" stroke-width="1"/>
<rect x="281.5" y="630" width="4" height="21" fill="#0a5a0a"/>
<path d="M279 649 H288 L283.5 656.5 Z" fill="#0a5a0a"/>
<path d="M281 658 L283.5 661 L286 658 M283.5 661 V664" fill="none" stroke="#10a010" stroke-width="1"/>
<circle cx="283" cy="627.5" r="3.8" fill="#0a14d8"/>
<path d="M281 622.5 H286" stroke="#0a14d8" stroke-width="1"/>
<rect x="285.5" y="626" width="2.5" height="3" fill="#b8b8ff"/>
</svg>
<div class="a" style="left:616px;top:117px;width:407px;height:22px;background:#fff"></div>
<svg style="left:0;top:0" width="1023" height="720" viewBox="0 0 1023 720">
<!-- window controls (gray) -->
<g fill="none" stroke="#a0a0a0" stroke-width="1.3">
<rect x="894.5" y="125.5" width="11" height="13"/>
<rect x="920.5" y="125.5" width="11" height="13"/>
<rect x="974.5" y="125.5" width="11" height="9"/>
<rect x="971.5" y="129.5" width="10" height="9" fill="#fff"/>
<path d="M999 127 L1009 137 M1009 127 L999 137"/>
</g>
<rect x="894" y="125" width="12" height="1.8" fill="#a0a0a0"/><rect x="920" y="125" width="12" height="1.8" fill="#a0a0a0"/>
<rect x="974" y="125" width="12" height="1.8" fill="#a0a0a0"/><rect x="971" y="129" width="11" height="1.8" fill="#a0a0a0"/>
<path d="M901 128.5 L897 132 L901 135.5Z M925 128.5 L929 132 L925 135.5Z" fill="#a0a0a0"/>
<rect x="947" y="136" width="10" height="1.8" fill="#a0a0a0"/>
<!-- HUD icons -->
<g>
<!-- zoom to fit -->
<circle cx="482" cy="151" r="5.6" fill="#f4f4f4" stroke="#555" stroke-width="1.1"/>
<path d="M477.5 155.5 L471 162" stroke="#4a9ad0" stroke-width="2.6" stroke-linecap="round"/>
<path d="M482 147 L480.5 148.6 H483.5Z M482 155 L480.5 153.4 H483.5Z M478 151 L479.6 149.5 V152.5Z M486 151 L484.4 149.5 V152.5Z" fill="#444"/>
<!-- zoom to area -->
<rect x="503.5" y="145.5" width="10" height="10" fill="none" stroke="#444" stroke-width="1" stroke-dasharray="2 1.3"/>
<circle cx="506.5" cy="152.5" r="5.3" fill="#eef2f4" stroke="#666" stroke-width="1.1"/>
<path d="M502.5 156.5 L496.5 162.5" stroke="#3d8fc4" stroke-width="2.6" stroke-linecap="round"/>
<!-- previous view -->
<path d="M523 158 L535 146 L540 150 L528 162 Z" fill="#e8e8e8" stroke="#666" stroke-width="1"/>
<ellipse cx="525.5" cy="159.5" rx="3" ry="4" transform="rotate(45 525.5 159.5)" fill="#d8d8d8" stroke="#666" stroke-width="0.9"/>
<path d="M532 157 H540" stroke="#3d8fc4" stroke-width="2"/><path d="M533.5 153.5 L529.5 157 L533.5 160.5Z" fill="#3d8fc4"/>
<!-- section view -->
<path d="M548.5 148 Q557 143 566 148 V160 Q557 165 548.5 160 Z" fill="#e0e0e0" stroke="#666" stroke-width="1"/>
<path d="M548.5 148 V160 Q551 162 553.5 162.5 V149.5 Q551 149 548.5 148Z M566 148 V160 Q563.5 162 561 162.5 V149.5 Q563.5 149 566 148Z" fill="#8fbede" stroke="#3a5a7a" stroke-width="0.8"/>
<path d="M549 153 L553 149.5 M549 157 L553 153.5 M549 161 L553 157.5 M561.5 153 L565.5 149.5 M561.5 157 L565.5 153.5 M561.5 161 L565.5 157.5" stroke="#3a6a90" stroke-width="0.8"/>
<path d="M554 150 Q557 147.5 560.5 150 V162.5 Q557 163.5 554 162.5Z" fill="#f4f4f4" stroke="#888" stroke-width="0.8"/>
<!-- view orientation -->
<path d="M574.5 149.5 L579 145 H591.5 V158 L587 162.5 H574.5Z" fill="#fff" stroke="#444" stroke-width="1"/>
<rect x="574.5" y="149.5" width="12.5" height="13" fill="#9cc8e6" stroke="#444" stroke-width="1"/>
<path d="M587 149.5 L591.5 145" stroke="#444" stroke-width="1"/>
<path d="M583 146.5 V149 M589 152 H588 M589 155 L588 156" stroke="#444" stroke-width="0.8"/>
<path d="M600 154 H605 L602.5 156.5Z" fill="#8a8a8a"/>
<!-- display style cube -->
<path d="M615.5 147.5 L620 144 L632 145.5 V160 L627 163 L615.5 161 Z" fill="#e6f0f6" stroke="#777" stroke-width="1"/>
<path d="M615.5 147.5 L627 149.5 V163 L615.5 161Z" fill="#7fb8de"/>
<path d="M620.5 148.5 V162" stroke="#c8e2f2" stroke-width="2"/>
<path d="M627 149.5 L632 145.5 V160 L627 163Z" fill="#fafafa" stroke="#888" stroke-width="0.8"/>
<path d="M640 154 H645 L642.5 156.5Z" fill="#8a8a8a"/>
<!-- eye -->
<path d="M654 154 Q663 145 672 154 Q663 163 654 154Z" fill="#e8e8e8" stroke="#9a9a9a" stroke-width="1"/>
<circle cx="663" cy="154" r="3.6" fill="#6a6a6a"/>
<path d="M663 147 V161" stroke="#555" stroke-width="1"/>
<path d="M680 154 H685 L682.5 156.5Z" fill="#8a8a8a"/>
<!-- color ball + pencil -->
<g transform="translate(702,152)"><circle r="8" fill="#3a7ad0"/><path d="M0 0 V-8 A8 8 0 0 1 8 0Z" fill="#d83030"/><path d="M0 0 H-8 A8 8 0 0 0 0 8Z" fill="#2a9a3a"/><path d="M0 0 H8 A8 8 0 0 1 0 8Z" fill="#e8c020"/></g>
<path d="M698.5 162.5 L709 151 L712.5 154 L702 165 L697.5 165.5Z" fill="#f2d040" stroke="#333" stroke-width="1"/>
<!-- color ball checker -->
<g transform="translate(728,151)"><circle r="8" fill="#3a7ad0"/><path d="M0 0 V-8 A8 8 0 0 1 8 0Z" fill="#d83030"/><path d="M0 0 H-8 A8 8 0 0 0 0 8Z" fill="#2a9a3a"/><path d="M0 0 H8 A8 8 0 0 1 0 8Z" fill="#e8c020"/></g>
<rect x="719" y="157" width="19" height="6" fill="#fff" stroke="#333" stroke-width="0.8"/>
<path d="M719 157 h3v3h-3z M725 157 h3v3h-3z M731 157 h3v3h-3z M722 160 h3v3h-3z M728 160 h3v3h-3z M734 160 h3v3h-3z" fill="#222"/>
<path d="M746 154 H751 L748.5 156.5Z" fill="#8a8a8a"/>
<!-- monitor -->
<rect x="760.5" y="146" width="17" height="11" fill="#e2e2e2" stroke="#666" stroke-width="1"/>
<path d="M769 157 V160 M765 161 H773" stroke="#555" stroke-width="1.4"/>
<path d="M786 154 H791 L788.5 156.5Z" fill="#8a8a8a"/>
</g>
<!-- task pane -->
<rect x="998.5" y="168.5" width="26" height="167" fill="#d6d6d6" stroke="#8e8e8e" stroke-width="1"/>
<rect x="999" y="169" width="24" height="22" fill="#f7f7f7"/>
<path d="M999 191.5 H1023 M999 215.5 H1023 M999 239.5 H1023 M999 263.5 H1023 M999 287.5 H1023 M999 311.5 H1023" stroke="#9a9a9a" stroke-width="1"/>
<g transform="translate(1010.5,180)"><circle r="9.3" fill="#1d5a8a" stroke="#0d3050" stroke-width="0.8"/><circle r="6" fill="none" stroke="#5a9ac8" stroke-width="0.7" stroke-dasharray="1.5 2"/><path d="M-1.5 -2.5 L2.5 0 L-1.5 2.5Z" fill="none" stroke="#cfe4f4" stroke-width="0.8"/><ellipse cx="-2" cy="-4" rx="5" ry="3" fill="#fff" opacity="0.18"/></g>
<g transform="translate(1001,193)"><path d="M1.5 9.5 L9.5 2 L17.5 9.5" fill="none" stroke="#1d5f86" stroke-width="2.4"/><path d="M4 9 V18.5 H15 V9" fill="#fff" stroke="#222" stroke-width="1.2"/><path d="M8 18.5 V13 H11.5 V18.5" fill="none" stroke="#222" stroke-width="1"/></g>
<g transform="translate(1002,218)"><path d="M1 4 L5 2 L5 17 L1 18.5Z M5 2 L9 0.5 V15.5 L5 17Z M9 0.5 L13 -0.5 V14 L9 15.5Z" fill="#f6f6f6" stroke="#222" stroke-width="1"/><path d="M1 4 L4 6 V18.5 M5 2 L8 4 V17 M9 0.5 L12 2.5 V15.5" fill="none" stroke="#222" stroke-width="0.8"/></g>
<g transform="translate(1001,243)"><path d="M0.5 3 H6 L7.5 5 H17 V16.5 H0.5Z" fill="#e0e0e0" stroke="#333" stroke-width="1"/><path d="M0.5 16.5 L4 8.5 H21 L17 16.5Z" fill="#f8f8f8" stroke="#333" stroke-width="1"/></g>
<g transform="translate(1002,267)"><rect x="0.5" y="0.5" width="16" height="16" rx="1.5" fill="#f4f4f4" stroke="#333" stroke-width="1"/><path d="M3 3 H12 V6 H3Z M3 8.5 H9 V11 H7.5 V13 H11 V14.5 H3 V13 H5.5 V11 H3Z M13 3 H15 V5 H13Z" fill="#f2c418" stroke="#6a5000" stroke-width="0.5"/><rect x="12.5" y="8" width="3" height="6.5" fill="#ddd" stroke="#555" stroke-width="0.6"/></g>
<g transform="translate(1010.5,299.5)"><circle r="8" fill="#3a7ad0"/><path d="M0 0 V-8 A8 8 0 0 1 8 0Z" fill="#d83030"/><path d="M0 0 H-8 A8 8 0 0 0 0 8Z" fill="#2a9a3a"/><path d="M0 0 H8 A8 8 0 0 1 0 8Z" fill="#e8c020"/><ellipse cx="-3" cy="-3.5" rx="3" ry="2" fill="#fff" opacity="0.35"/></g>
<g transform="translate(1002,315)"><rect x="0.5" y="0.5" width="17" height="17" rx="1.5" fill="#f4f4f4" stroke="#333" stroke-width="1.1"/><rect x="0.5" y="0.5" width="17" height="3" fill="#3a8fc9"/><rect x="2.5" y="6" width="3.5" height="2" fill="#2a73a6"/><rect x="2.5" y="10" width="3.5" height="2" fill="#2a73a6"/><rect x="2.5" y="14" width="3.5" height="2" fill="#2a73a6"/><path d="M7.5 7 H15.5 M7.5 11 H15.5 M7.5 15 H15.5" stroke="#333" stroke-width="0.9"/></g>
</svg>

<!-- ============ BOTTOM ============ -->
<div class="a" style="left:0;top:686px;width:1023px;height:16px;background:#f7f7f7"></div>
<div class="ln" style="left:0;top:686px;width:1022px;height:1px;background:#8c8c8c"></div>
<div class="ln" style="left:0;top:701px;width:1023px;height:1px;background:#a8a8a8"></div>
<div class="ln" style="left:1021px;top:686px;width:1px;height:16px;background:#a8a8a8"></div>
<div class="a" style="left:2px;top:686px;width:64px;height:15px;background:#a9a9a9;border-top:1px solid #2a2a2a"></div>
<div class="a" style="left:0;top:687px;width:2px;height:14px;background:#9fc3d3"></div>
<svg style="left:0;top:686px" width="240" height="16" viewBox="0 686 240 16">
<path d="M17.5 687 V701 M33.5 687 V701 M49.5 687 V701" stroke="#c4c4c4" stroke-width="1"/>
<g fill="#c9c9c9"><rect x="5" y="690" width="1.6" height="9"/><path d="M13.5 690 L7.5 694.5 L13.5 699Z"/>
<path d="M28.5 690 L22.5 694.5 L28.5 699Z"/>
<path d="M39 690 L45 694.5 L39 699Z"/>
<path d="M53.5 690 L59.5 694.5 L53.5 699Z"/><rect x="60.5" y="690" width="1.6" height="9"/></g>
</svg>
<div class="a" style="left:66px;top:687px;width:65px;height:14px;background:#fff"></div>
<div class="a" style="left:80px;top:686px;height:15px;line-height:15px;font-size:11.8px;font-weight:bold;color:#111">Modèle</div>
<div class="a" style="left:130px;top:686px;width:109px;height:16px;background:#d4d4d4;border:1px solid #8e8e8e"></div>
<div class="a" style="left:140px;top:686px;height:15px;line-height:15px;font-size:12px;color:#1a1a1a">Motion Study 1</div>

<div class="a" style="left:0;top:702px;width:1023px;height:18px;background:#f7f7f7"></div>
<div class="st" style="left:1px;font-size:11.8px">SOLIDWORKS Edition étudiante - Utilisation universitaire uniquement</div>
<div class="st" style="left:560px;font-size:12px">Sous-contraint</div>
<div class="st" style="left:656px;font-size:11.8px">Edition: Assemblage</div>
<div class="st" style="left:885px;font-size:11.3px">Personnalisé</div>
<svg style="left:0;top:700px" width="1023" height="20" viewBox="0 700 1023 20">
<path d="M972 714 L975 710.5 L978 714Z" fill="#333"/>
<g transform="translate(1005,706)"><path d="M0.5 6 L7 1 L15 4 V8 L9 12.5 L0.5 9Z" fill="#eee" stroke="#333" stroke-width="1"/><path d="M0.5 6 L9 9 L15 4 M9 9 V12.5" fill="none" stroke="#333" stroke-width="0.9"/><circle cx="7.5" cy="4.5" r="2" fill="none" stroke="#333" stroke-width="0.9"/></g>
</svg>

</body></html>
